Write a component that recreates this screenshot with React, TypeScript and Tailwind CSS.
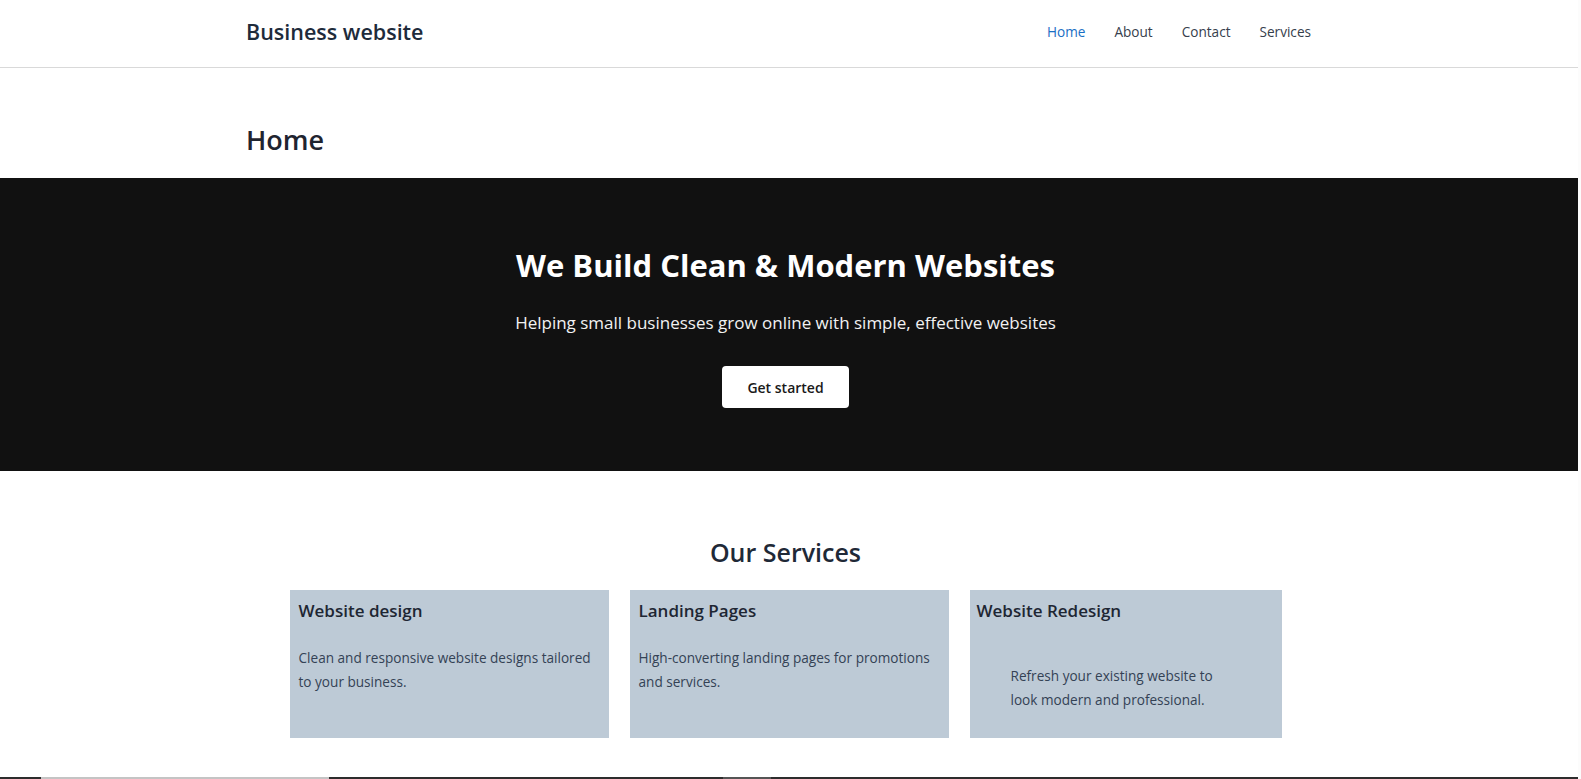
import React from 'react'

const navItems = ['Home', 'About', 'Contact', 'Services']

const services = [
  {
    title: 'Website design',
    text: 'Clean and responsive website designs tailored to your business.',
  },
  {
    title: 'Landing Pages',
    text: 'High-converting landing pages for promotions and services.',
  },
]

const App: React.FC = () => {
  return (
    <div className="flex min-h-screen w-full bg-[#fcfcfc] font-['Open_Sans',sans-serif]">
      <div className="flex w-[1578px] flex-col bg-white">
        {/* header */}
        <header className="flex h-[68px] items-center justify-between border-b border-[#d9d9d9] pl-[246px] pr-[267px] pb-[4px]">
          <div className="text-[21.5px] leading-none font-semibold text-[#1e2b3b]">
            Business website
          </div>
          <nav className="flex items-center gap-[29px] text-[13.6px] leading-none">
            {navItems.map((item) => (
              <a
                key={item}
                className={item === 'Home' ? 'text-[#1a6fc4]' : 'text-[#36404c]'}
              >
                {item}
              </a>
            ))}
          </nav>
        </header>

        <h1 className="mt-[58px] mb-[25px] pl-[246px] text-[27px] leading-none font-semibold text-[#1f2430]">
          Home
        </h1>

        {/* hero */}
        <section className="flex h-[293px] flex-col items-center bg-[#111111] pt-[72px] pr-[7px]">
          <h2 className="text-[31px] leading-none font-bold text-white">
            We Build Clean &amp; Modern Websites
          </h2>
          <p className="mt-[33px] text-[17px] leading-none text-[#f2f2f2]">
            Helping small businesses grow online with simple, effective websites
          </p>
          <button className="mt-[35px] flex h-[42px] w-[127px] items-center justify-center rounded-[4px] bg-white text-[14px] font-semibold text-[#1a1a1a]">
            Get started
          </button>
        </section>

        {/* services */}
        <section className="flex flex-col items-center pt-[69px] pr-[7px]">
          <h2 className="text-[25px] leading-none font-semibold text-[#1f2937]">
            Our Services
          </h2>
          <div className="mt-[25px] flex gap-[21px]">
            {services.map((s) => (
              <div
                key={s.title}
                className="h-[148px] w-[319px] bg-[#bdcad6] px-[9px] pt-[12px]"
              >
                <h3 className="text-[17px] leading-none font-semibold text-[#1e2633]">
                  {s.title}
                </h3>
                <p className="mt-[27px] text-[13.6px] leading-[24px] text-[#344255]">
                  {s.text}
                </p>
              </div>
            ))}
            <div className="h-[148px] w-[312px] bg-[#bdcad6] px-[7px] pt-[12px]">
              <h3 className="text-[17px] leading-none font-semibold text-[#1e2633]">
                Website Redesign
              </h3>
              <p className="mt-[45px] ml-[34px] w-[225px] text-[13.6px] leading-[24px] text-[#344255]">
                Refresh your existing website to look modern and professional.
              </p>
            </div>
          </div>
        </section>

        {/* footer */}
        <footer className="mt-[39px] flex h-[60px] bg-[#2d2d2d]">
          <div className="ml-[41px] h-[30px] w-[288px] border-t-2 border-[#c4c4c4] bg-[#ececec]" />
          <div className="ml-[394px] h-[30px] w-[48px] bg-[#555555]" />
        </footer>
      </div>
    </div>
  )
}

export default App
